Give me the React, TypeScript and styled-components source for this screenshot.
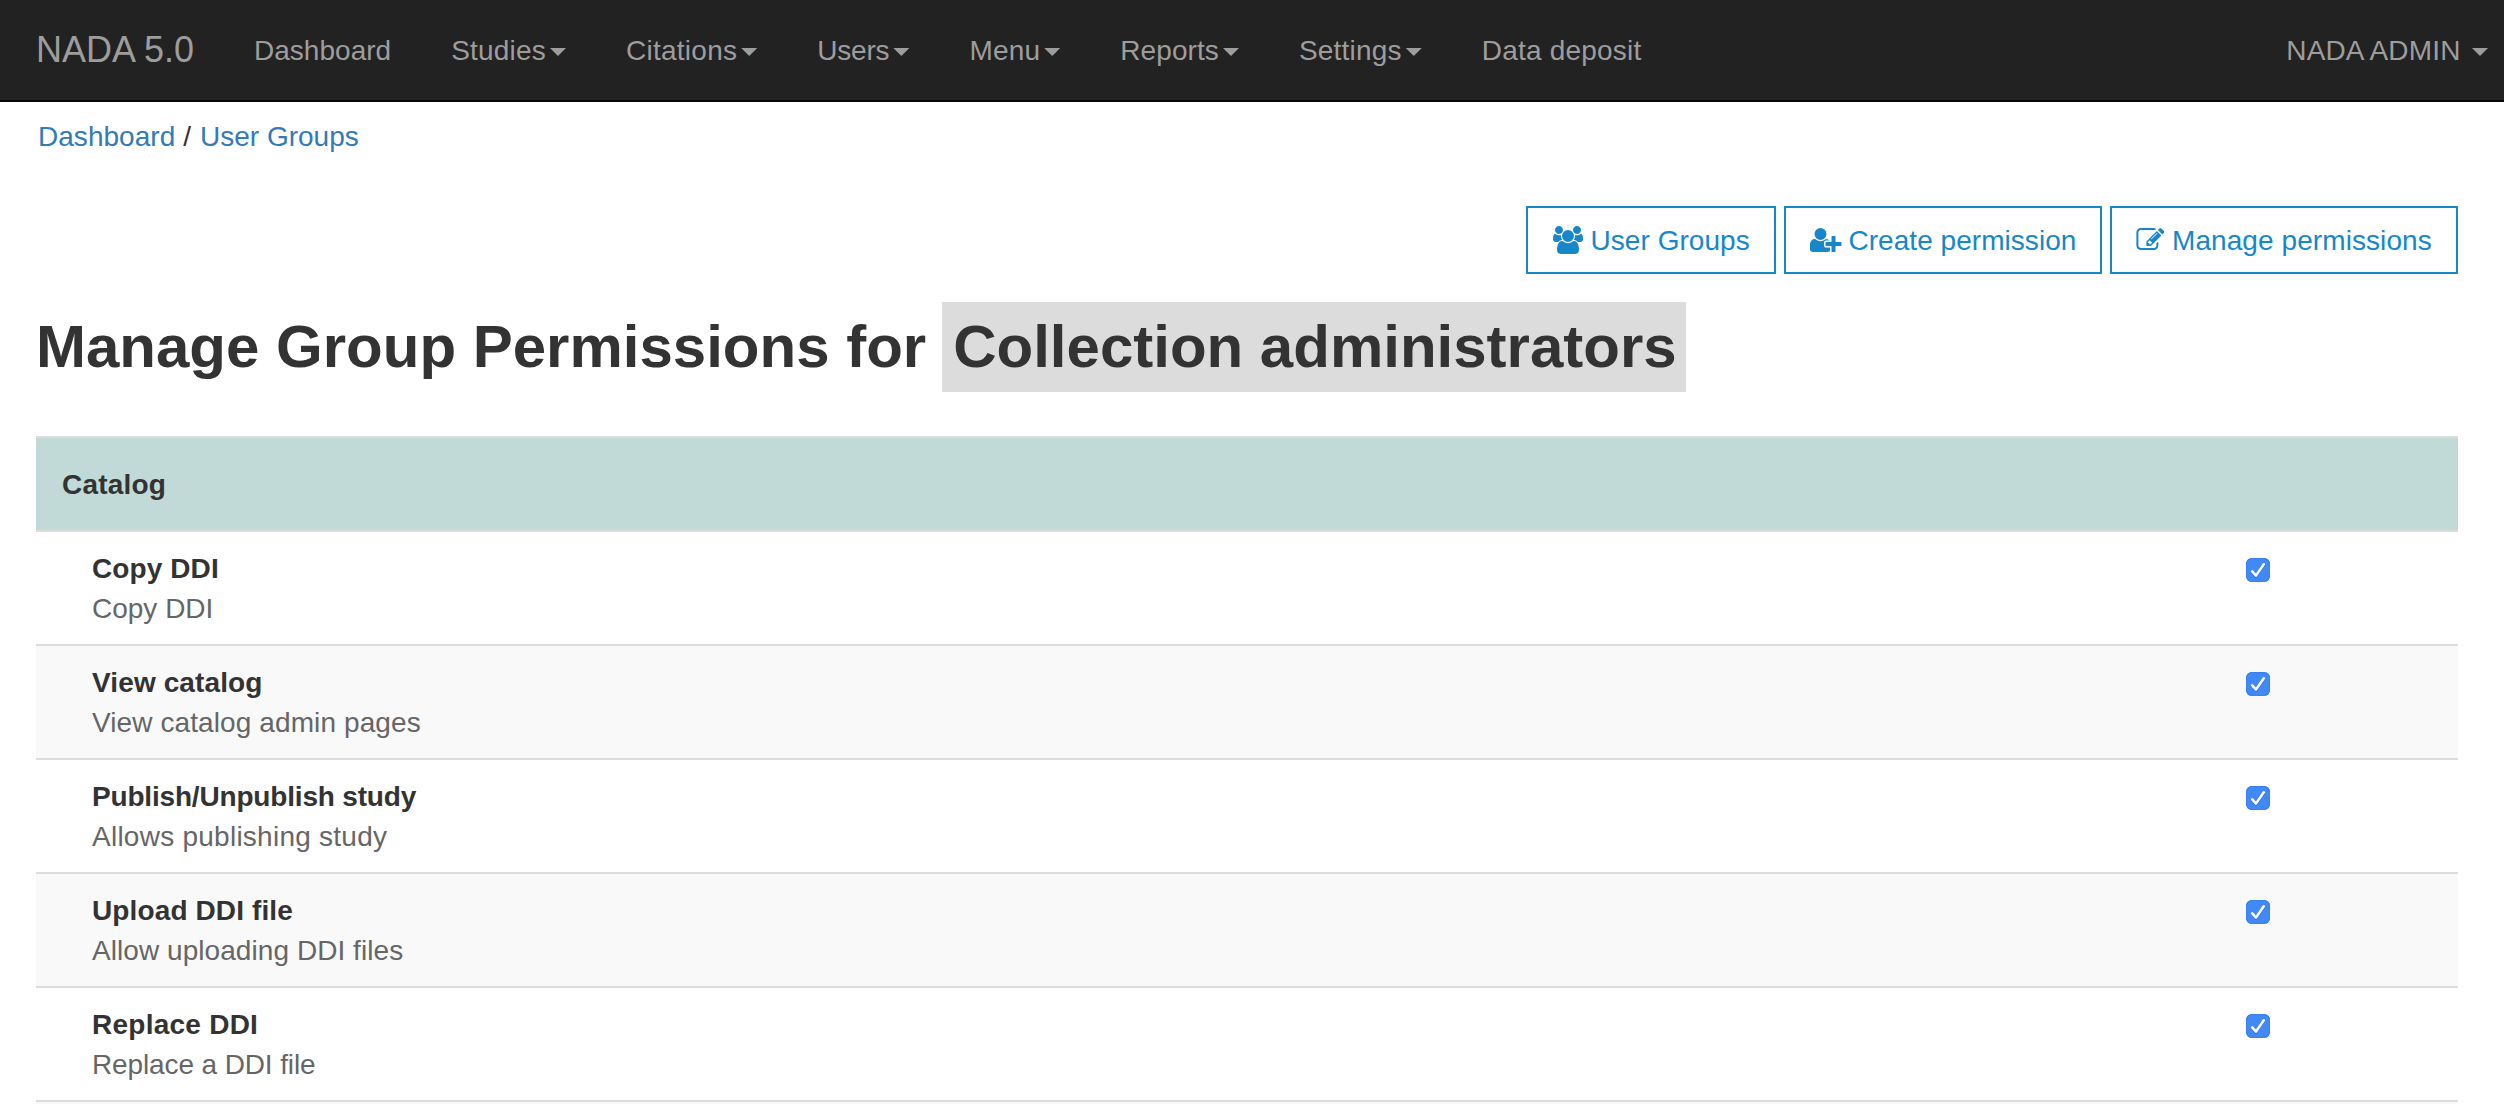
import React from 'react';
import styled, { createGlobalStyle } from 'styled-components';

const GlobalStyle = createGlobalStyle`
  *, *::before, *::after { box-sizing: border-box; }
  body {
    margin: 0;
    background: #fff;
    color: #333;
    font-family: "Helvetica Neue", "Liberation Sans", Arial, sans-serif;
    font-size: 28px;
    line-height: 40px;
  }
`;

const Page = styled.div`
  height: 1104px;
  overflow: hidden;
`;

const Text = styled.span<{ $track?: number }>`
  letter-spacing: ${(p) => p.$track ?? 0}px;
  white-space: pre;
`;

const Navbar = styled.nav`
  display: flex;
  height: 102px;
  background: #222;
  border-bottom: 2px solid #080808;
  color: #9d9d9d;
`;

const Brand = styled.a`
  width: 224px;
  padding: 30px 0 30px 36px;
  font-size: 36px;
`;

const NavItem = styled.a<{ $end?: boolean }>`
  display: flex;
  align-items: center;
  padding: 2px ${(p) => (p.$end ? 16 : 30)}px 0 30px;
  margin-left: ${(p) => (p.$end ? 'auto' : '0')};
`;

const Caret = styled.i<{ $gap?: number }>`
  width: 16px;
  height: 8px;
  margin: 2px 0 0 ${(p) => p.$gap ?? 4}px;
  background: #9d9d9d;
  clip-path: polygon(0 0, 100% 0, 50% 100%);
`;

const Content = styled.main`
  padding: 15px 46px 0 36px;
`;

const Breadcrumb = styled.div`
  display: flex;
  padding-left: 2px;
`;

const Crumb = styled.a`
  color: #337ab7;
`;

const Slash = styled.span`
  padding: 0 9px 0 8px;
`;

const Actions = styled.div`
  display: flex;
  justify-content: flex-end;
  gap: 8px;
  margin-top: 49px;
`;

const ActionButton = styled.a<{ $width: number; $gap: number }>`
  display: flex;
  align-items: center;
  gap: ${(p) => p.$gap}px;
  width: ${(p) => p.$width}px;
  height: 68px;
  padding: 2px 0 0 24px;
  border: 2px solid #1787c9;
  color: #1787c9;
  white-space: nowrap;

  svg {
    flex: none;
    height: 28px;
    margin-bottom: 2px;
    fill: currentColor;
  }
`;

const Title = styled.h1`
  display: flex;
  align-items: center;
  height: 90px;
  margin: 28px 0 44px;
  font-size: 60px;
  line-height: 66px;
  font-weight: 700;
`;

const GroupName = styled.span`
  margin-left: 16px;
  padding: 12px 9px 12px 11px;
  background: #dcdcdc;
`;

const Table = styled.div`
  display: flex;
  flex-direction: column;
`;

const SectionRow = styled.div`
  height: 94px;
  padding: 27px 26px 25px;
  border-top: 2px solid #ddd;
  background: #c1dad7;
  font-weight: 700;
`;

const Row = styled.div`
  display: flex;
  height: 114px;
  flex: none;
  padding: 17px 0 15px 56px;
  border-top: 2px solid #ddd;

  &:nth-child(odd) {
    background: #f9f9f9;
  }
`;

const Label = styled.div`
  flex: 1;
`;

const Name = styled.div`
  font-weight: 700;
`;

const Description = styled.div`
  color: #666;
`;

const CheckCell = styled.div`
  width: 212px;
  padding-top: 9px;
`;

const CheckBox = styled.span`
  display: block;
  width: 24px;
  height: 24px;
  border-radius: 6px;
  background: #4289f8;
  box-shadow: inset 0 0 0 1px #377ff2;

  svg {
    display: block;
    filter: drop-shadow(0 1px 0.5px rgba(20, 70, 170, 0.45));
  }
`;

const menu: { label: string; track: number; caret?: boolean }[] = [
  { label: 'Dashboard', track: 0.02 },
  { label: 'Studies', track: 0.2, caret: true },
  { label: 'Citations', track: 0.26, caret: true },
  { label: 'Users', track: -0.2, caret: true },
  { label: 'Menu', track: 0.2, caret: true },
  { label: 'Reports', track: 0.1, caret: true },
  { label: 'Settings', track: 0.2, caret: true },
  { label: 'Data deposit', track: 0.21 },
];

const permissions = [
  { name: 'Copy DDI', track: 0.1, description: 'Copy DDI', descTrack: 0 },
  { name: 'View catalog', track: 0.12, description: 'View catalog admin pages', descTrack: 0.1 },
  { name: 'Publish/Unpublish study', track: -0.18, description: 'Allows publishing study', descTrack: 0.25 },
  { name: 'Upload DDI file', track: 0.12, description: 'Allow uploading DDI files', descTrack: 0.06 },
  { name: 'Replace DDI', track: 0.25, description: 'Replace a DDI file', descTrack: -0.12 },
];

const UsersIcon = () => (
  <svg width="32" viewBox="0 0 2048 1792">
    <path d="M657 896q-162 5-265 128h-134q-82 0-138-40.5t-56-118.5q0-353 124-353 6 0 43.5 21t97.5 42.5 119 21.5q67 0 133-23-5 37-5 66 0 139 81 256zm1071 637q0 120-73 189.5t-194 69.5h-874q-121 0-194-69.5t-73-189.5q0-53 3.5-103.5t14-109 26.5-108.5 43-97.5 62-81 85.5-53.5 111.5-20q10 0 43 21.5t73 48 107 48 135 21.5 135-21.5 107-48 73-48 43-21.5q61 0 111.5 20t85.5 53.5 62 81 43 97.5 26.5 108.5 14 109 3.5 103.5zm-1024-1277q0 106-75 181t-181 75-181-75-75-181 75-181 181-75 181 75 75 181zm704 384q0 159-112.5 271.5t-271.5 112.5-271.5-112.5-112.5-271.5 112.5-271.5 271.5-112.5 271.5 112.5 112.5 271.5zm576 225q0 78-56 118.5t-138 40.5h-134q-103-123-265-128 81-117 81-256 0-29-5-66 66 23 133 23 59 0 119-21.5t97.5-42.5 43.5-21q124 0 124 353zm-128-609q0 106-75 181t-181 75-181-75-75-181 75-181 181-75 181 75 75 181z" />
  </svg>
);

const UserPlusIcon = () => (
  <svg width="32" viewBox="32 0 2048 1792">
    <path d="M704 896q-159 0-271.5-112.5t-112.5-271.5 112.5-271.5 271.5-112.5 271.5 112.5 112.5 271.5-112.5 271.5-271.5 112.5zm960 128h352q13 0 22.5 9.5t9.5 22.5v192q0 13-9.5 22.5t-22.5 9.5h-352v352q0 13-9.5 22.5t-22.5 9.5h-192q-13 0-22.5-9.5t-9.5-22.5v-352h-352q-13 0-22.5-9.5t-9.5-22.5v-192q0-13 9.5-22.5t22.5-9.5h352v-352q0-13 9.5-22.5t22.5-9.5h192q13 0 22.5 9.5t9.5 22.5v352zm-736 224q0 52 38 90t90 38h256v238q-68 50-171 50h-874q-121 0-194-69t-73-190q0-53 3.5-103.5t14-109 26.5-108.5 43-97.5 62-81 85.5-53.5 111.5-20q19 0 39 17 79 61 154.5 91.5t164.5 30.5 164.5-30.5 154.5-91.5q20-17 39-17 132 0 217 96h-223q-52 0-90 38t-38 90v192z" />
  </svg>
);

const EditIcon = () => (
  <svg width="28" viewBox="-24 0 1792 1792">
    <path d="M888 1184l116-116-152-152-116 116v56h96v96h56zm440-720q-16-16-33 1l-350 350q-17 17-1 33t33-1l350-350q17-17 1-33zm80 594v190q0 119-84.5 203.5t-203.5 84.5h-832q-119 0-203.5-84.5t-84.5-203.5v-832q0-119 84.5-203.5t203.5-84.5h832q63 0 117 25 15 7 18 23 3 17-9 29l-49 49q-14 14-32 8-23-6-45-6h-832q-66 0-113 47t-47 113v832q0 66 47 113t113 47h832q66 0 113-47t47-113v-126q0-13 9-22l64-64q15-15 35-7t20 29zm-96-738l288 288-672 672h-288v-288zm444 132l-92 92-288-288 92-92q28-28 68-28t68 28l152 152q28 28 28 68t-28 68z" />
  </svg>
);

const Checked = () => (
  <CheckBox role="checkbox" aria-checked="true">
    <svg width="24" height="24" viewBox="0 0 24 24" fill="none" stroke="#fff" strokeWidth="2.5" strokeLinecap="round" strokeLinejoin="round">
      <path d="M6.2 13.4 10 17.6 17.8 6.2" />
    </svg>
  </CheckBox>
);

export default function App() {
  return (
    <Page>
      <GlobalStyle />
      <Navbar>
        <Brand><Text>NADA 5.0</Text></Brand>
        {menu.map((item) => (
          <NavItem key={item.label}>
            <Text $track={item.track}>{item.label}</Text>
            {item.caret && <Caret />}
          </NavItem>
        ))}
        <NavItem $end>
          <Text $track={0.15}>NADA ADMIN</Text>
          <Caret $gap={11.5} />
        </NavItem>
      </Navbar>
      <Content>
        <Breadcrumb>
          <Crumb><Text $track={0.03}>Dashboard</Text></Crumb>
          <Slash>/</Slash>
          <Crumb><Text>User Groups</Text></Crumb>
        </Breadcrumb>
        <Actions>
          <ActionButton $width={250} $gap={6.5}><UsersIcon /><Text $track={0.05}>User Groups</Text></ActionButton>
          <ActionButton $width={318} $gap={6.5}><UserPlusIcon /><Text $track={0.04}>Create permission</Text></ActionButton>
          <ActionButton $width={348} $gap={8}><EditIcon /><Text $track={0.08}>Manage permissions</Text></ActionButton>
        </Actions>
        <Title>
          <Text>Manage Group Permissions for</Text>
          <GroupName><Text>Collection administrators</Text></GroupName>
        </Title>
        <Table>
          <SectionRow><Text $track={0.2}>Catalog</Text></SectionRow>
          {permissions.map((p) => (
            <Row key={p.name}>
              <Label>
                <Name><Text $track={p.track}>{p.name}</Text></Name>
                <Description><Text $track={p.descTrack}>{p.description}</Text></Description>
              </Label>
              <CheckCell><Checked /></CheckCell>
            </Row>
          ))}
          <Row />
        </Table>
      </Content>
    </Page>
  );
}
